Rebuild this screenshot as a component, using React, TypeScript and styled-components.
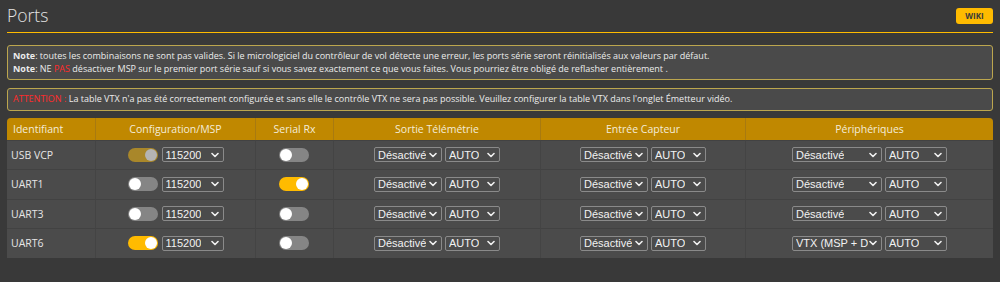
import React from "react";
import styled, {createGlobalStyle} from "styled-components";

const GlobalStyle = createGlobalStyle`
    html, body {
        margin: 0;
        padding: 0;
        background: #393939;
    }
    body {
        font-family: "Open Sans", "DejaVu Sans", sans-serif;
        color: #e2e2e2;
        width: 1000px;
        height: 282px;
        overflow: hidden;
    }
`;

type Port = {
    name: string;
    msp: "on" | "off" | "locked";
    serialRx: boolean;
    periph: string;
};

const ports: Port[] = [
    {name: "USB VCP", msp: "locked", serialRx: false, periph: "Désactivé"},
    {name: "UART1", msp: "off", serialRx: true, periph: "Désactivé"},
    {name: "UART3", msp: "off", serialRx: false, periph: "Désactivé"},
    {name: "UART6", msp: "on", serialRx: false, periph: "VTX (MSP + D"},
];

const Chevron = () => (
    <svg width="8" height="6" viewBox="0 0 8 6">
        <path d="M1 1.5 L4 4.5 L7 1.5" fill="none" stroke="#f0f0f0" strokeWidth="1.6" strokeLinecap="round" strokeLinejoin="round"/>
    </svg>
);

const Select = ({value, width}: {value: string; width: number}) => (
    <SelectBox style={{width}}>
        <SelectText>{value}</SelectText>
        <Chevron/>
    </SelectBox>
);

const Switch = ({state}: {state: "on" | "off" | "locked"}) => (
    <Track state={state}>
        <Knob state={state}/>
    </Track>
);

const App = () => {
    return (
        <>
            <GlobalStyle/>
            <Page>
                <TitleBar>
                    <Title>Ports</Title>
                    <WikiButton>WIKI</WikiButton>
                </TitleBar>
                <NoteBox>
                    <div><b>Note</b>: toutes les combinaisons ne sont pas valides. Si le micrologiciel du contrôleur de vol détecte une erreur, les ports série seront réinitialisés aux valeurs par défaut.</div>
                    <div><b>Note</b>: NE <Red>PAS</Red> désactiver MSP sur le premier port série sauf si vous savez exactement ce que vous faites. Vous pourriez être obligé de reflasher entièrement .</div>
                </NoteBox>
                <NoteBox>
                    <div><Red>ATTENTION :</Red> La table VTX n'a pas été correctement configurée et sans elle le contrôle VTX ne sera pas possible. Veuillez configurer la table VTX dans l'onglet Émetteur vidéo.</div>
                </NoteBox>
                <PortsTable>
                    <colgroup>
                        <col style={{width: 88}}/>
                        <col style={{width: 160}}/>
                        <col style={{width: 78}}/>
                        <col style={{width: 207}}/>
                        <col style={{width: 205}}/>
                        <col style={{width: 248}}/>
                    </colgroup>
                    <thead>
                        <tr>
                            <HeadCell align="left">Identifiant</HeadCell>
                            <HeadCell>Configuration/MSP</HeadCell>
                            <HeadCell>Serial Rx</HeadCell>
                            <HeadCell>Sortie Télémétrie</HeadCell>
                            <HeadCell>Entrée Capteur</HeadCell>
                            <HeadCell>Périphériques</HeadCell>
                        </tr>
                    </thead>
                    <tbody>
                        {ports.map(p => (
                            <Row key={p.name}>
                                <NameCell>{p.name}</NameCell>
                                <Cell>
                                    <Group>
                                        <Switch state={p.msp}/>
                                        <Select value="115200" width={62}/>
                                    </Group>
                                </Cell>
                                <Cell>
                                    <Group><Switch state={p.serialRx ? "on" : "off"}/></Group>
                                </Cell>
                                <Cell>
                                    <Group>
                                        <Select value="Désactivé" width={68}/>
                                        <Select value="AUTO" width={55}/>
                                    </Group>
                                </Cell>
                                <Cell>
                                    <Group>
                                        <Select value="Désactivé" width={68}/>
                                        <Select value="AUTO" width={55}/>
                                    </Group>
                                </Cell>
                                <Cell>
                                    <Group>
                                        <Select value={p.periph} width={90}/>
                                        <Select value="AUTO" width={62}/>
                                    </Group>
                                </Cell>
                            </Row>
                        ))}
                    </tbody>
                </PortsTable>
            </Page>
        </>
    );
};
export default App

const Page = styled.div`
    padding: 0 7px;
    display: flex;
    flex-direction: column;
`;

const TitleBar = styled.div`
    display: flex;
    justify-content: space-between;
    align-items: center;
    height: 32px;
    border-bottom: 1px solid #ffbb00;
    margin-bottom: 12px;
`;

const Title = styled.h1`
    margin: 0;
    font-size: 17.5px;
    font-weight: 300;
    color: #e4e4e4;
    line-height: 32px;
    margin-top: -2px;
`;

const WikiButton = styled.a`
    background: #ffbb00;
    color: #3a3a3a;
    font-size: 8px;
    font-weight: 700;
    border-radius: 3px;
    width: 37px;
    height: 16px;
    display: flex;
    align-items: center;
    justify-content: center;
    margin-top: -1px;
`;

const NoteBox = styled.div`
    background: #4a4a4a;
    border: 1px solid #bca64e;
    border-radius: 3px;
    padding: 4px 5px;
    font-size: 9px;
    line-height: 12.5px;
    color: #ececec;
    margin-bottom: 8px;
    & + & {
        margin-bottom: 7px;
    }
    b {
        font-weight: 700;
    }
`;

const Red = styled.span`
    color: #ff2b2b;
`;

const PortsTable = styled.table`
    width: 986px;
    table-layout: fixed;
    border-collapse: separate;
    border-spacing: 0;
    background: #4b4b4b;
    border-radius: 4px 4px 0 0;
    overflow: hidden;
    font-size: 10.5px;
`;

const HeadCell = styled.th<{align?: string}>`
    background: #c08800;
    color: #f4ecd8;
    font-weight: 400;
    height: 22px;
    padding: 0 6px;
    text-align: ${p => p.align || "center"};
    border-left: 1px solid #a87a10;
    &:first-child {
        border-left: none;
    }
`;

const Row = styled.tr`
    height: 29.5px;
    td {
        border-top: 1px solid #424242;
    }
`;

const Cell = styled.td`
    padding: 0;
    border-left: 1px solid #444444;
`;

const NameCell = styled.td`
    padding: 0 4px;
    color: #e6e6e6;
`;

const Group = styled.div`
    display: flex;
    justify-content: center;
    align-items: center;
    gap: 3px;
`;

const Track = styled.span<{state: string}>`
    width: 30px;
    height: 14px;
    border-radius: 7px;
    margin-right: 1px;
    display: flex;
    align-items: center;
    padding: 0 1px;
    box-sizing: border-box;
    justify-content: ${p => p.state === "off" ? "flex-start" : "flex-end"};
    background: ${p => p.state === "on" ? "#ffbb00" : p.state === "locked" ? "#a9872a" : "#858585"};
`;

const Knob = styled.span<{state: string}>`
    width: 12px;
    height: 12px;
    border-radius: 50%;
    background: ${p => p.state === "locked" ? "#b4b4b4" : "#ffffff"};
`;

const SelectBox = styled.span`
    height: 15px;
    box-sizing: border-box;
    border: 1px solid #8a8a8a;
    border-radius: 2px;
    display: flex;
    align-items: center;
    justify-content: space-between;
    padding: 0 4px 0 3px;
    font-family: "Liberation Sans", Arial, sans-serif;
    font-size: 11px;
    color: #f2f2f2;
    overflow: hidden;
`;

const SelectText = styled.span`
    white-space: nowrap;
    overflow: hidden;
`;
